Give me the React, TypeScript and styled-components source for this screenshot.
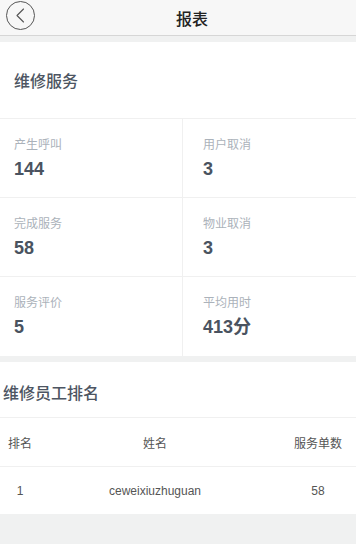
import React from "react";
import styled, { createGlobalStyle } from "styled-components";

const Global = createGlobalStyle`
  html, body { margin: 0; padding: 0; background: #f0f1f1; }
  body { font-family: "Liberation Sans", "Noto Sans CJK SC", sans-serif; }
  * { box-sizing: border-box; }
`;

const Page = styled.div`
  width: 356px;
  min-height: 544px;
  background: #f0f1f1;
  display: flex;
  flex-direction: column;
`;

const Header = styled.header`
  height: 36px;
  background: #f7f7f7;
  border-bottom: 1px solid #d6d6d6;
  display: flex;
  align-items: center;
`;

const BackButton = styled.button`
  width: 40px;
  height: 35px;
  border: none;
  background: transparent;
  padding: 0;
  display: flex;
  align-items: center;
  justify-content: center;
  margin-top: -4px;
`;

const Title = styled.h1`
  flex: 1;
  margin: 0;
  padding-right: 32px;
  padding-left: 20px;
  text-align: center;
  font-size: 16px;
  font-weight: 500;
  color: #222;
  font-family: "Noto Sans CJK SC", sans-serif;
`;

const Card = styled.section<{ $top: number }>`
  background: #fff;
  margin-top: ${(p) => p.$top}px;
`;

const SectionTitle = styled.div<{ $h: number; $pl: number; $pt: number }>`
  height: ${(p) => p.$h}px;
  display: flex;
  align-items: center;
  padding-left: ${(p) => p.$pl}px;
  padding-top: ${(p) => p.$pt}px;
  font-family: "Noto Sans CJK SC", sans-serif;
  font-size: 16px;
  font-weight: 500;
  color: #4d5562;
  border-bottom: 1px solid #f0f0f0;
`;

const Grid = styled.div`
  display: grid;
  grid-template-columns: 182px 1fr;
`;

const Cell = styled.div<{ $right: boolean; $last: boolean }>`
  height: 79px;
  padding: 16px 0 0 ${(p) => (p.$right ? 20 : 14)}px;
  border-left: ${(p) => (p.$right ? "1px solid #f0f0f0" : "none")};
  border-bottom: ${(p) => (p.$last ? "none" : "1px solid #f0f0f0")};
  display: flex;
  flex-direction: column;
  gap: 6px;
`;

const Label = styled.div`
  font-family: "Noto Sans CJK SC", sans-serif;
  font-size: 12px;
  line-height: 17px;
  color: #abb2ba;
`;

const Value = styled.div`
  font-family: "Liberation Sans", "Noto Sans CJK SC", sans-serif;
  font-size: 18px;
  font-weight: bold;
  line-height: 22px;
  color: #4a5360;
`;

const Row = styled.div<{ $h: number; $border: boolean }>`
  display: grid;
  grid-template-columns: 40px 230px 1fr;
  height: ${(p) => p.$h}px;
  align-items: center;
  border-bottom: ${(p) => (p.$border ? "1px solid #f0f0f0" : "none")};
`;

const Col = styled.div<{ $pl?: number }>`
  text-align: center;
  padding-left: ${(p) => p.$pl ?? 0}px;
  font-size: 12px;
  color: #555;
  font-family: "Liberation Sans", "Noto Sans CJK SC", sans-serif;
`;

const BackIcon = () => (
  <svg width="31" height="31" viewBox="0 0 31 31" fill="none">
    <circle cx="15.5" cy="15.5" r="14" stroke="#555" strokeWidth="1" />
    <path d="M18.5 9 L12 15.5 L18.5 22" stroke="#555" strokeWidth="1.1" strokeLinecap="round" strokeLinejoin="round" />
  </svg>
);

const stats = [
  { label: "产生呼叫", value: "144" },
  { label: "用户取消", value: "3" },
  { label: "完成服务", value: "58" },
  { label: "物业取消", value: "3" },
  { label: "服务评价", value: "5" },
  { label: "平均用时", value: "413分" },
];

export default function App() {
  return (
    <Page>
      <Global />
      <Header>
        <BackButton aria-label="返回">
          <BackIcon />
        </BackButton>
        <Title>报表</Title>
      </Header>
      <Card $top={6}>
        <SectionTitle $h={77} $pl={14} $pt={0}>维修服务</SectionTitle>
        <Grid>
          {stats.map((s, i) => (
            <Cell key={s.label} $right={i % 2 === 1} $last={i >= 4}>
              <Label>{s.label}</Label>
              <Value>{s.value}</Value>
            </Cell>
          ))}
        </Grid>
      </Card>
      <Card $top={6}>
        <SectionTitle $h={56} $pl={3} $pt={4}>维修员工排名</SectionTitle>
        <Row $h={49} $border>
          <Col>排名</Col>
          <Col>姓名</Col>
          <Col $pl={10}>服务单数</Col>
        </Row>
        <Row $h={47} $border={false}>
          <Col>1</Col>
          <Col>ceweixiuzhuguan</Col>
          <Col $pl={10}>58</Col>
        </Row>
      </Card>
    </Page>
  );
}
